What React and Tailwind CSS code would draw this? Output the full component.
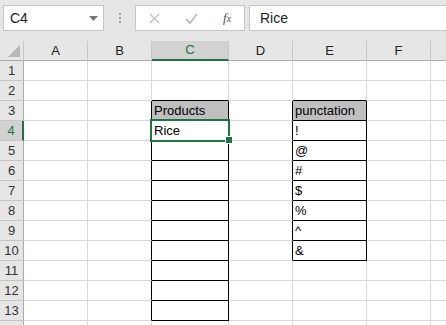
import React from "react";

const cols = [
  { key: "A", w: "w-[64px]" },
  { key: "B", w: "w-[64px]" },
  { key: "C", w: "w-[77px]" },
  { key: "D", w: "w-[64px]" },
  { key: "E", w: "w-[74px]" },
  { key: "F", w: "w-[64px]" },
  { key: "G", w: "w-[64px]" },
];

const rows = [1, 2, 3, 4, 5, 6, 7, 8, 9, 10, 11, 12, 13, 14];

const data = {
  C3: "Products",
  C4: "Rice",
  E3: "punctation",
  E4: "!",
  E5: "@",
  E6: "#",
  E7: "$",
  E8: "%",
  E9: "^",
  E10: "&",
};

const inTable = (c, r) =>
  (c === "C" && r >= 3 && r <= 13) || (c === "E" && r >= 3 && r <= 10);

const headerFill = (c, r) => (c === "C" || c === "E") && r === 3;

const Cell = ({ col, idx, r }) => {
  const c = col.key;
  const next = cols[idx + 1];
  const rightBlack = inTable(c, r) || (next && inTable(next.key, r));
  const bottomBlack = inTable(c, r) || inTable(c, r + 1);
  return (
    <div
      className={`${col.w} h-[20px] shrink-0 border-r border-b flex items-center pl-[2px] text-[13px] text-black ${
        rightBlack ? "border-r-black" : "border-r-[#d9d9d9]"
      } ${bottomBlack ? "border-b-black" : "border-b-[#d9d9d9]"} ${
        headerFill(c, r) ? "bg-[#bfbfbf]" : "bg-white"
      }`}
    >
      {data[c + r]}
    </div>
  );
};

export default function App() {
  return (
    <div className="w-[446px] h-[325px] overflow-hidden bg-white font-['Liberation_Sans',Arial,sans-serif] relative">
      {/* formula bar */}
      <div className="h-[41px] bg-[#e6e6e6] flex items-start pt-[5px] pl-[3px]">
        <div className="w-[101px] h-[26px] bg-white border border-[#c6c6c6] flex items-center justify-between pl-[6px] pr-[5px] text-[14px] text-[#222]">
          <span>C4</span>
          <svg width="9" height="5" viewBox="0 0 9 5">
            <path d="M0 0h9L4.5 5z" fill="#777" />
          </svg>
        </div>
        <div className="w-[31px] h-[26px] flex flex-col items-center justify-center gap-[2px]">
          <span className="w-[2px] h-[2px] bg-[#a0a0a0]" />
          <span className="w-[2px] h-[2px] bg-[#a0a0a0]" />
          <span className="w-[2px] h-[2px] bg-[#a0a0a0]" />
        </div>
        <div className="w-[110px] h-[26px] bg-white border border-[#c6c6c6] flex items-center">
          <svg className="ml-[13px]" width="11" height="11" viewBox="0 0 11 11">
            <path d="M1 1l9 9M10 1l-9 9" stroke="#c0c0c0" strokeWidth="1.3" />
          </svg>
          <svg className="ml-[25px]" width="13" height="11" viewBox="0 0 13 11">
            <path d="M1 6l4 4 7-9" stroke="#c0c0c0" strokeWidth="2" fill="none" />
          </svg>
          <span className="ml-[25px] text-[13px] italic font-['Liberation_Serif',serif] text-[#555]">
            f<span className="text-[10px]">x</span>
          </span>
        </div>
        <div className="ml-[4px] flex-1 h-[26px] bg-white border border-[#c6c6c6] border-r-0 flex items-center pl-[10px] text-[14px] text-[#222]">
          Rice
        </div>
      </div>

      {/* column headers */}
      <div className="flex h-[20px]">
        <div className="w-[24px] h-[20px] shrink-0 bg-[#e6e6e6] border-r border-b border-r-[#c6c6c6] border-b-[#ababab] flex items-end justify-end pr-[3px] pb-[3px]">
          <svg width="12" height="12" viewBox="0 0 12 12">
            <path d="M12 0v12H0z" fill="#b7b7b7" />
          </svg>
        </div>
        {cols.map((col) => (
          <div
            key={col.key}
            className={`${col.w} h-[20px] shrink-0 border-r border-r-[#c6c6c6] flex items-center justify-center text-[13px] ${
              col.key === "C"
                ? "bg-[#d2d2d2] border-b-2 border-b-[#217346] text-[#217346]"
                : "bg-[#e6e6e6] border-b border-b-[#ababab] text-[#222]"
            }`}
          >
            {col.key}
          </div>
        ))}
      </div>

      {/* rows */}
      {rows.map((r) => (
        <div key={r} className="flex h-[20px]">
          <div
            className={`w-[24px] h-[20px] shrink-0 border-b border-b-[#c6c6c6] border-r flex items-center justify-center text-[13px] ${
              r === 4
                ? "bg-[#d2d2d2] border-r-2 border-r-[#217346] text-[#217346]"
                : "bg-[#e6e6e6] border-r-[#ababab] text-[#333]"
            }`}
          >
            {r}
          </div>
          {cols.map((col, idx) => (
            <Cell key={col.key} col={col} idx={idx} r={r} />
          ))}
        </div>
      ))}

      {/* active cell outline */}
      <div className="absolute left-[150px] top-[119px] w-[80px] h-[23px] border-2 border-[#217346] pointer-events-none" />
      <div className="absolute left-[226px] top-[137px] w-[6px] h-[6px] bg-[#217346] border border-white box-content -m-[1px]" />
    </div>
  );
}
